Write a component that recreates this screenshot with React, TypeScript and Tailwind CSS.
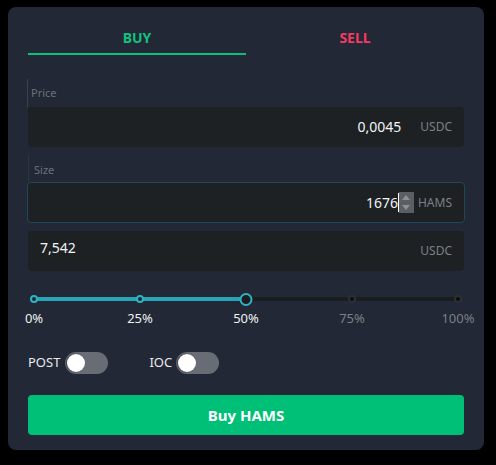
import { useState } from 'react';

const font = { fontFamily: '"Noto Sans", "Open Sans", sans-serif' };

const marks = [
  { pct: 0, label: '0%', left: 'left-[0%]' },
  { pct: 25, label: '25%', left: 'left-[25%]' },
  { pct: 50, label: '50%', left: 'left-[50%]' },
  { pct: 75, label: '75%', left: 'left-[75%]' },
  { pct: 100, label: '100%', left: 'left-[100%]' },
];

function Toggle({ on, onClick }: { on: boolean; onClick: () => void }) {
  return (
    <button
      type="button"
      onClick={onClick}
      className={`flex h-[22px] w-[43px] items-center rounded-full px-[2px] ${
        on ? 'justify-end bg-[#00bf77]' : 'justify-start bg-[#676c75]'
      }`}
    >
      <span className="h-[18px] w-[18px] rounded-full bg-white shadow-[-1px_0_2px_rgba(0,0,0,0.45)]" />
    </button>
  );
}

export default function App() {
  const [side, setSide] = useState<'buy' | 'sell'>('buy');
  const [post, setPost] = useState(false);
  const [ioc, setIoc] = useState(false);
  const value = 50;

  return (
    <div className="min-h-[465px] bg-black pl-[8px] pt-[7px]" style={font}>
      <div className="flex h-[443px] w-[476px] flex-col rounded-lg bg-[#222835] px-5 pt-[15px]">
        {/* tabs */}
        <div className="flex">
          <button
            type="button"
            onClick={() => setSide('buy')}
            className={`flex-1 border-b-2 pb-[5px] pt-[6px] text-sm font-bold leading-5 text-[#13c07e] ${
              side === 'buy' ? 'border-[#0cbf7a]' : 'border-transparent'
            }`}
          >
            BUY
          </button>
          <button
            type="button"
            onClick={() => setSide('sell')}
            className={`flex-1 border-b-2 pb-[5px] pt-[6px] text-sm font-bold leading-5 text-[#f23b62] ${
              side === 'sell' ? 'border-[#f23b62]' : 'border-transparent'
            }`}
          >
            SELL
          </button>
        </div>

        {/* price */}
        <div className="-ml-px mt-6 h-[28px] border-l border-[#3b404a] pl-[3px] pt-[7px] text-[11px] leading-[14px] text-[#6c717a]">
          Price
        </div>
        <div className="flex h-[40px] items-center justify-end rounded bg-[#1d2123] pr-3">
          <span className="text-sm text-[#f1f3f5]">0,0045</span>
          <span className="ml-[19px] text-xs text-[#7b8088]">USDC</span>
        </div>

        {/* size */}
        <div className="mt-2 h-[27px] border-l border-[#30353e] pl-[5px] pt-[8px] text-[11px] leading-[14px] text-[#6c717a]">
          Size
        </div>
        <div className="-mx-px flex h-[41px] items-center justify-end rounded border border-[#1e4858] bg-[#1d2123] pr-3">
          <span className="text-sm text-[#f1f3f5]">1676</span>
          <span className="h-[19px] w-px bg-white" />
          <span className="flex h-[21px] w-[15px] flex-col items-center justify-between bg-[#5b5e62] py-[3px]">
            <span className="h-0 w-0 border-x-[4px] border-b-[5px] border-x-transparent border-b-[#8e9195]" />
            <span className="h-0 w-0 border-x-[4px] border-t-[5px] border-x-transparent border-t-[#8e9195]" />
          </span>
          <span className="ml-[4px] text-xs text-[#7b8088]">HAMS</span>
        </div>

        {/* total */}
        <div className="mt-2 flex h-[40px] justify-between rounded bg-[#1d2123] pl-3 pr-3">
          <span className="pt-[7px] text-sm leading-5 text-[#f1f3f5]">7,542</span>
          <span className="self-center text-xs text-[#7b8088]">USDC</span>
        </div>

        {/* slider */}
        <div className="relative mx-[6px] mt-[22px] h-[12px]">
          <div className="absolute inset-x-0 top-[4px] h-[4px] rounded-full bg-[#1b1e21]" />
          <div className="absolute left-0 top-[4px] h-[4px] w-1/2 rounded-full bg-[#27a5b5]" />
          {marks.map((m) =>
            m.pct === value ? (
              <span
                key={m.pct}
                className={`absolute top-[-0.5px] h-[13px] w-[13px] -translate-x-1/2 rounded-full border-2 border-[#2fb3c4] bg-[#1b1d20] ${m.left}`}
              />
            ) : m.pct < value ? (
              <span
                key={m.pct}
                className={`absolute top-[2px] h-[8px] w-[8px] -translate-x-1/2 rounded-full border-2 border-[#2fb3c4] bg-[#1f2933] ${m.left}`}
              />
            ) : (
              <span
                key={m.pct}
                className={`absolute top-[2px] h-[8px] w-[8px] -translate-x-1/2 rounded-full border-2 border-[#2c3034] bg-[#0c0d0f] ${m.left}`}
              />
            ),
          )}
        </div>
        <div className="relative mx-[6px] mt-[4px] h-[18px]">
          {marks.map((m) => (
            <span
              key={m.pct}
              className={`absolute top-0 -translate-x-1/2 text-[13px] leading-[18px] ${m.left} ${
                m.pct <= value ? 'text-[#eef0f2]' : 'text-[#7b8088]'
              }`}
            >
              {m.label}
            </span>
          ))}
        </div>

        {/* toggles */}
        <div className="mt-[25px] flex items-center text-[13px] text-[#e8eaed]">
          <span>POST</span>
          <span className="ml-[5px]">
            <Toggle on={post} onClick={() => setPost(!post)} />
          </span>
          <span className="ml-[41px]">IOC</span>
          <span className="ml-[4px]">
            <Toggle on={ioc} onClick={() => setIoc(!ioc)} />
          </span>
        </div>

        <button
          type="button"
          className="mt-[21px] h-[40px] rounded bg-[#00bf77] text-[15px] font-bold text-white"
        >
          {side === 'buy' ? 'Buy HAMS' : 'Sell HAMS'}
        </button>
      </div>
    </div>
  );
}
